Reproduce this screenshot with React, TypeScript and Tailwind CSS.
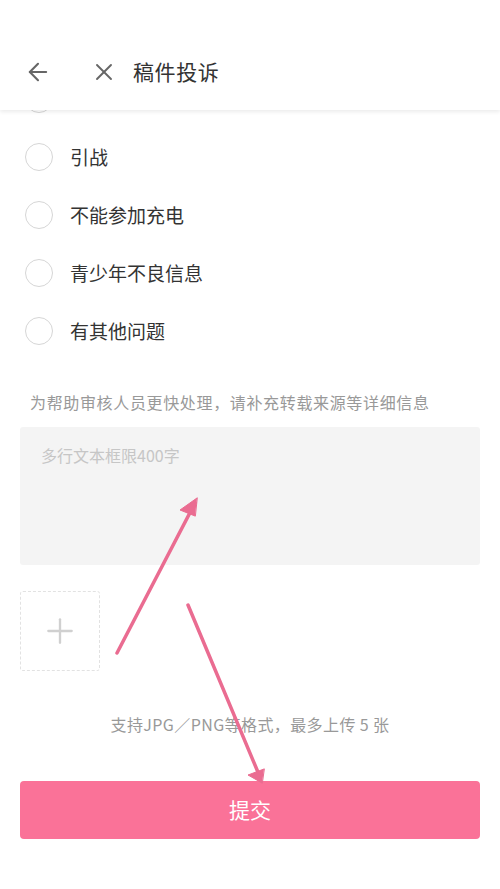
import { ArrowLeft, X, Plus } from "lucide-react";

const options = ["引战", "不能参加充电", "青少年不良信息", "有其他问题"];

function Radio() {
  return <span className="w-[28px] h-[28px] rounded-full border-[1.5px] border-[#d6d6d6] shrink-0" />;
}

export default function App() {
  return (
    <div
      className="relative w-[500px] h-[889px] bg-white overflow-hidden"
      style={{ fontFamily: '"Noto Sans CJK SC", "Noto Sans", sans-serif' }}
    >
      {/* Header */}
      <div className="relative z-10 h-[110px] bg-white flex items-center pt-[34px] shadow-[0_2px_4px_rgba(0,0,0,0.08)]">
        <ArrowLeft className="ml-[24px] w-[28px] h-[28px] text-[#666]" strokeWidth={1.8} />
        <X className="ml-[38px] w-[28px] h-[28px] text-[#666]" strokeWidth={1.6} />
        <span className="ml-[15px] text-[21px] tracking-[0.6px] text-[#333]">稿件投诉</span>
      </div>

      {/* Options list, scrolled so the previous row peeks under the header */}
      <div className="-mt-[40px] flex flex-col">
        {["", ...options].map((label, i) => (
          <div key={i} className="h-[58px] flex items-center pl-[25px]">
            <Radio />
            <span className="ml-[17px] text-[19px] text-[#333]">{label}</span>
          </div>
        ))}
      </div>

      <p className="mt-[30px] pl-[30px] text-[16px] text-[#999] tracking-[0.65px]">
        为帮助审核人员更快处理，请补充转载来源等详细信息
      </p>

      <div className="mt-[13px] mx-[20px] h-[138px] bg-[#f4f4f4] rounded-[3px] px-[21px] pt-[16px]">
        <span className="text-[16px] text-[#c6c6c6]">多行文本框限400字</span>
      </div>

      <div className="mt-[26px] ml-[20px] w-[80px] h-[80px] border border-dashed border-[#e2e2e2] rounded-[3px] flex items-center justify-center">
        <Plus className="w-[40px] h-[40px] text-[#d0d0d0]" strokeWidth={1.4} />
      </div>

      <p className="mt-[41px] text-center text-[16px] tracking-[0.4px] text-[#999]">支持JPG／PNG等格式，最多上传 5 张</p>

      <button className="mt-[45px] mx-[20px] w-[460px] h-[58px] rounded-[4px] bg-[#fa7298] text-white text-[21px] flex items-center justify-center">
        提交
      </button>

      {/* Annotation arrows */}
      <svg className="absolute inset-0 pointer-events-none" width="500" height="889" viewBox="0 0 500 889">
        <g stroke="#ea6c91" strokeWidth="3.5" strokeLinecap="round" fill="#ea6c91">
          <line x1="117" y1="653" x2="195" y2="503" />
          <polygon points="197,498 180,510 195,516" strokeWidth="1" />
          <line x1="188" y1="605" x2="260" y2="777" />
          <polygon points="262,783 248,775 264,769" strokeWidth="1" />
        </g>
      </svg>
    </div>
  );
}
